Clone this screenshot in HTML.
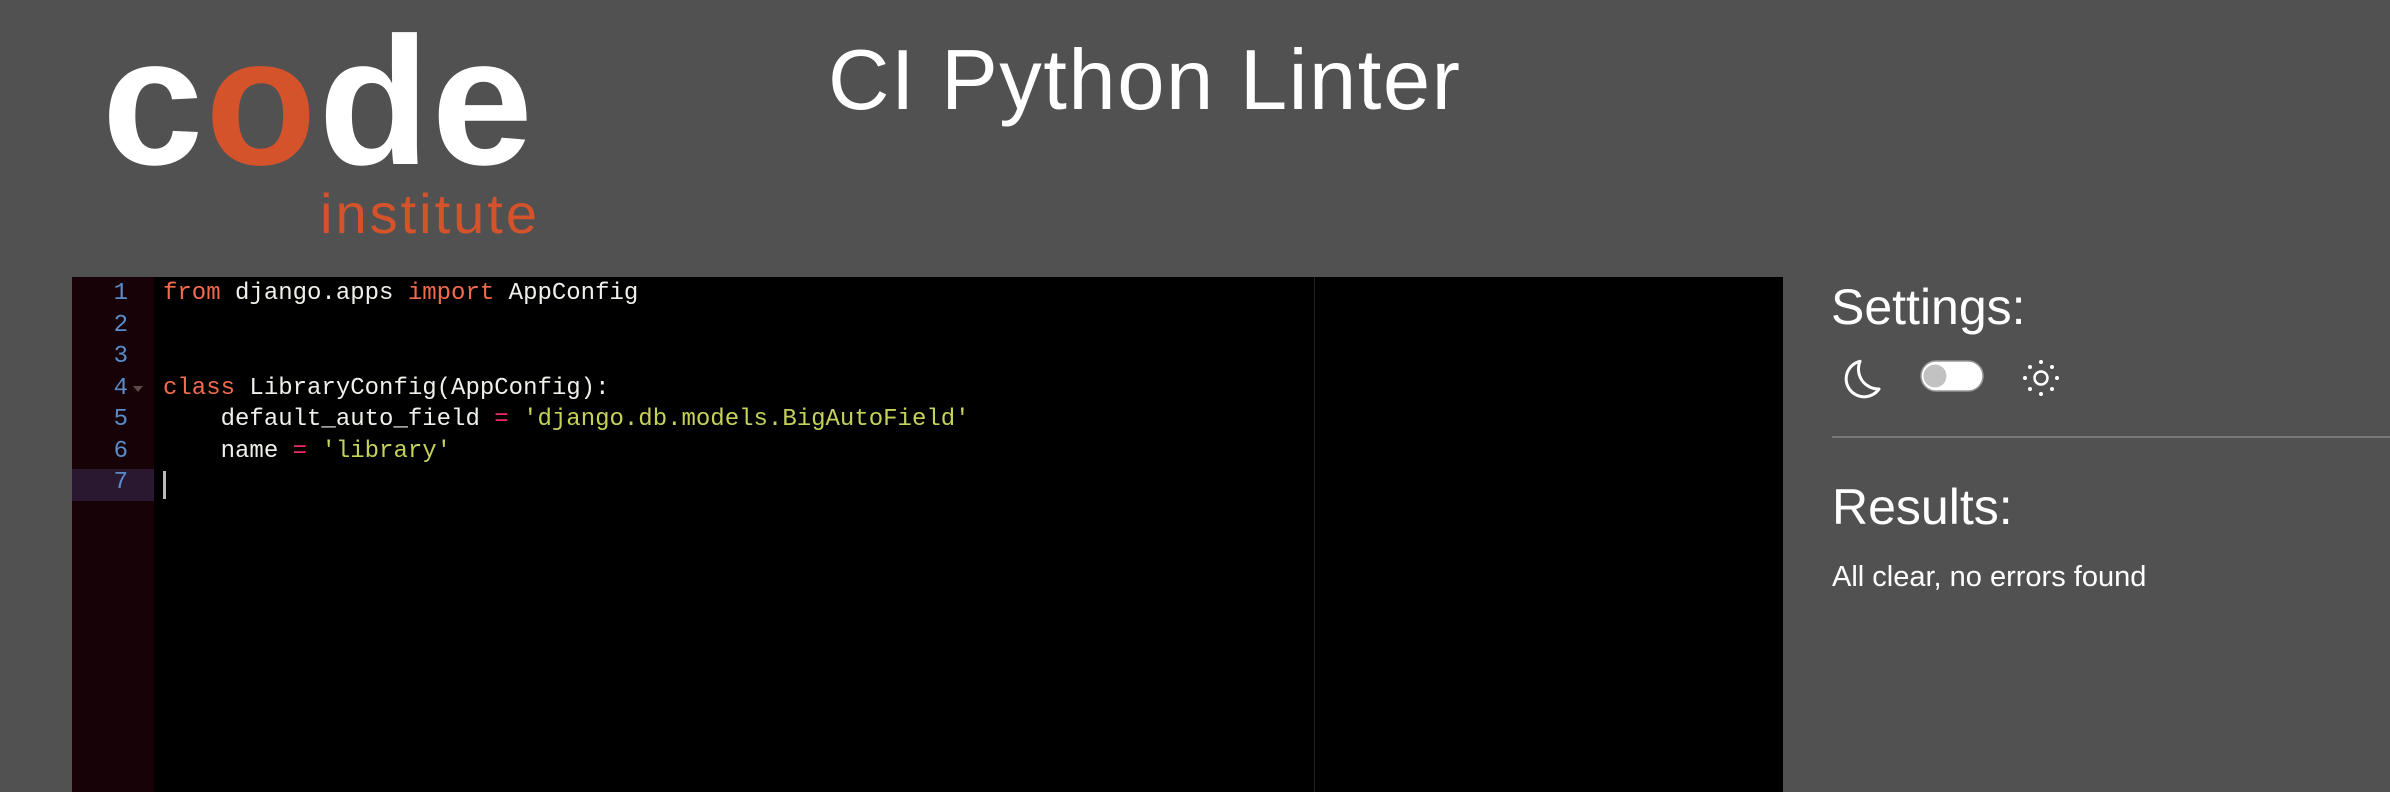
<!DOCTYPE html>
<html><head><meta charset="utf-8"><style>
html,body{margin:0;padding:0;}
body{width:2390px;height:792px;background:#515151;position:relative;overflow:hidden;font-family:"Liberation Sans",sans-serif;}
.abs{position:absolute;white-space:nowrap;}
.code{left:102px;top:10px;font-weight:bold;font-size:182px;line-height:1;color:#fff;letter-spacing:2px;}
.code .o{color:#d4532b;}
.inst{left:320px;top:186px;font-size:56px;color:#d4532b;letter-spacing:3px;line-height:1;}
.title{left:828px;top:38px;font-size:85px;color:#fff;letter-spacing:1.5px;line-height:1;}
#ed{left:72px;top:277px;width:1711px;height:515px;background:#000;}
#gut{position:absolute;left:0;top:0;width:82px;height:100%;background:#170208;}
.ln{position:absolute;left:0;width:56px;text-align:right;color:#5b8cc8;font-family:"Liberation Mono",monospace;font-size:24px;line-height:31.5px;height:31.5px;}
.cl{position:absolute;left:91px;font-family:"Liberation Mono",monospace;font-size:24px;line-height:31.5px;color:#f0f0ea;white-space:pre;}
.k{color:#f26a4e}.p{color:#f92672}.s{color:#c6d157}
#vd{position:absolute;left:1242px;top:0;width:1px;height:100%;background:#222;}
.h{font-size:50px;color:#fff;line-height:1;}
</style></head><body>
<div class="abs code">c<span class="o">o</span>de</div>
<div class="abs inst">institute</div>
<div class="abs title">CI Python Linter</div>
<div class="abs" id="ed">
 <div id="gut"></div>
 <div style="position:absolute;left:0;top:192px;width:82px;height:32px;background:#2a1830"></div>
 <div id="vd"></div>
 <div class="ln" style="top:1px">1</div>
 <div class="ln" style="top:32.5px">2</div>
 <div class="ln" style="top:64px">3</div>
 <div class="ln" style="top:95.5px">4</div>
 <div style="position:absolute;left:61px;top:109px;width:0;height:0;border-left:5px solid transparent;border-right:5px solid transparent;border-top:6px solid #5a4a4a"></div>
 <div class="ln" style="top:127px">5</div>
 <div class="ln" style="top:158.5px">6</div>
 <div class="ln" style="top:190px">7</div>
 <div class="cl" style="top:1px"><span class="k">from</span> django.apps <span class="k">import</span> AppConfig</div>
 <div class="cl" style="top:95.5px"><span class="k">class</span> LibraryConfig(AppConfig):</div>
 <div class="cl" style="top:127px">    default_auto_field <span class="p">=</span> <span class="s">'django.db.models.BigAutoField'</span></div>
 <div class="cl" style="top:158.5px">    name <span class="p">=</span> <span class="s">'library'</span></div>
 <div style="position:absolute;left:91px;top:194px;width:3px;height:28px;background:#bbb"></div>
</div>
<div class="abs h" style="left:1831px;top:282px;">Settings:</div>
<svg class="abs" style="left:1836px;top:352px" width="230" height="52" viewBox="1836 352 230 52">
 <path d="M1860 361.3 A18 18 0 1 0 1879 389 A20 20 0 0 1 1860 361.3 Z" fill="none" stroke="#fff" stroke-width="3" stroke-linejoin="round"/>
 <rect x="1921" y="361" width="62" height="30" rx="15" fill="#fff" stroke="#999" stroke-width="1.5"/>
 <circle cx="1935" cy="376" r="11.5" fill="#c2c2c2"/>
 <circle cx="2041" cy="378" r="6.5" fill="none" stroke="#fff" stroke-width="2.5"/>
 <g fill="#fff">
  <circle cx="2041" cy="362" r="2"/><circle cx="2041" cy="394" r="2"/>
  <circle cx="2025" cy="378" r="2"/><circle cx="2057" cy="378" r="2"/>
  <circle cx="2030" cy="367" r="2"/><circle cx="2052" cy="367" r="2"/>
  <circle cx="2030" cy="389" r="2"/><circle cx="2052" cy="389" r="2"/>
 </g>
</svg>
<div class="abs" style="left:1832px;top:436px;width:558px;height:2px;background:#777"></div>
<div class="abs h" style="left:1832px;top:482px;">Results:</div>
<div class="abs" style="left:1832px;top:563px;font-size:29px;color:#fff;line-height:1;">All clear, no errors found</div>
</body></html>
